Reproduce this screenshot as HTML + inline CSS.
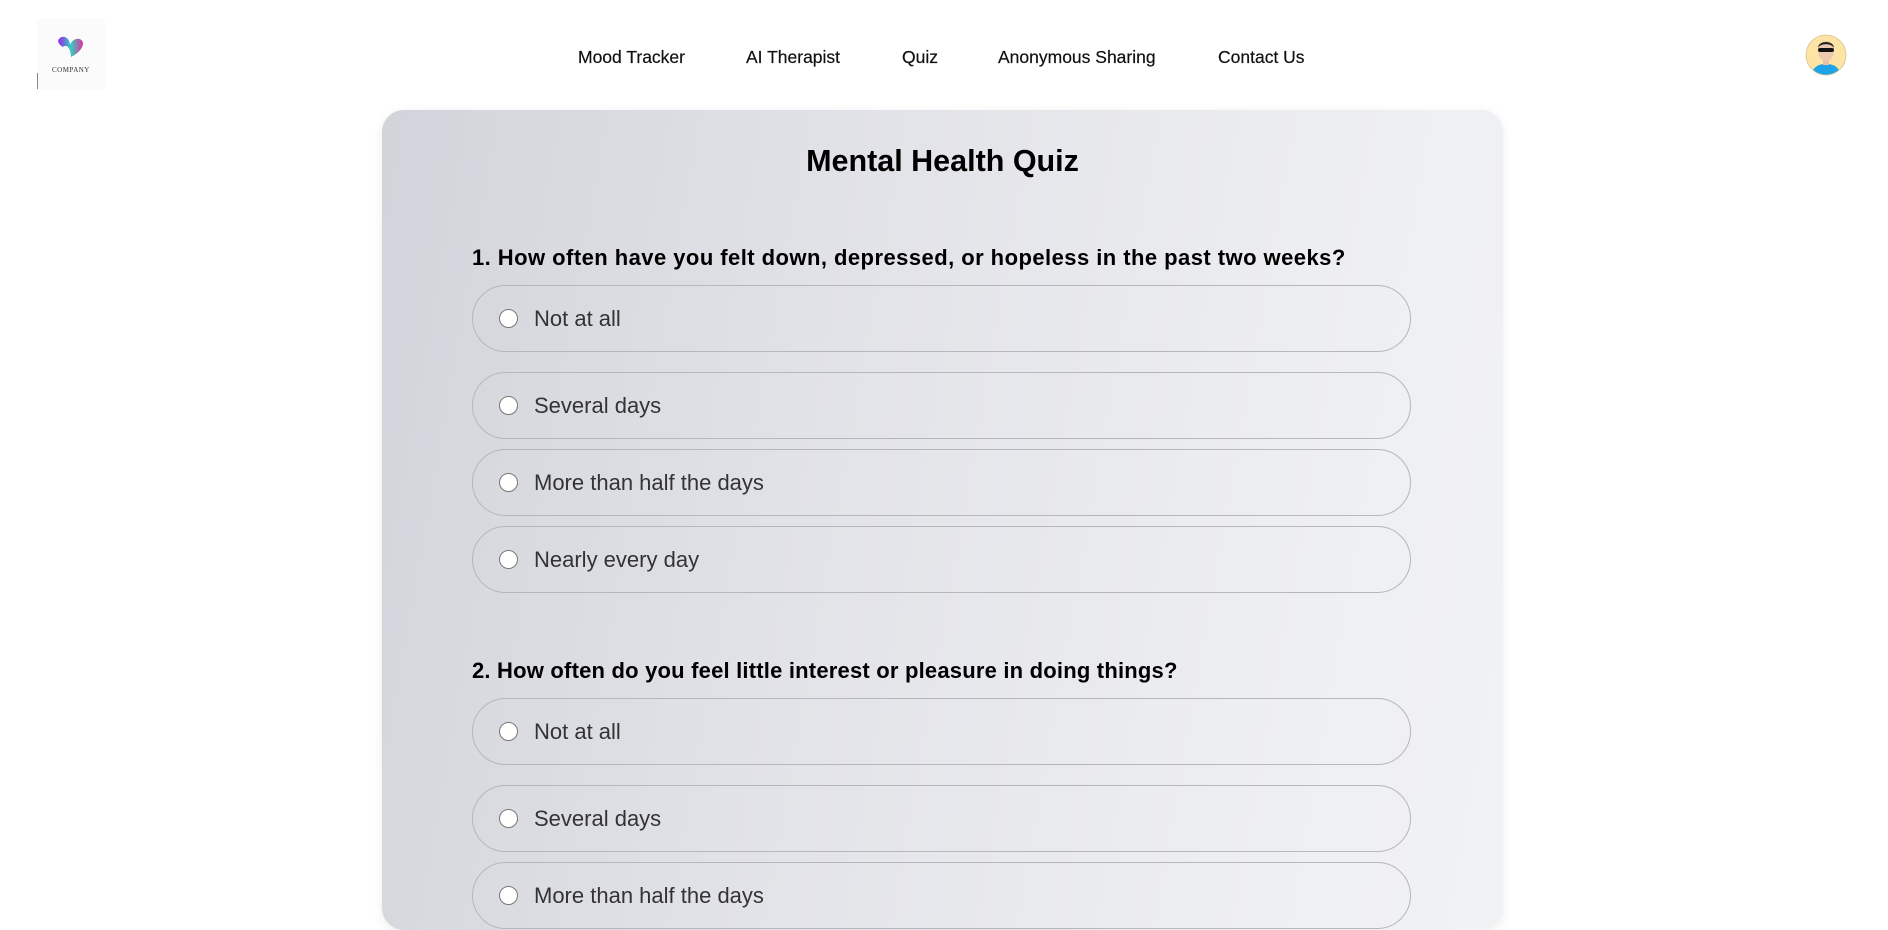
<!DOCTYPE html>
<html><head><meta charset="utf-8"><style>
*{margin:0;padding:0;box-sizing:border-box}
body{width:1888px;height:896px;overflow:hidden;background:#fff;font-family:"Liberation Sans",sans-serif;position:relative;color:#000}
.nav a{position:absolute;top:47px;font-size:17.5px;font-weight:500;color:#111;text-decoration:none;white-space:nowrap;-webkit-text-stroke:0.2px #111}
.card{position:absolute;left:382px;top:110px;width:1121px;height:820px;border-radius:22px;background:linear-gradient(100deg,#d1d4da 0%,#e2e3e8 40%,#eeeff2 80%,#f1f2f4 100%);box-shadow:0 2px 10px rgba(0,0,0,0.08)}
h1{position:absolute;left:0;width:100%;text-align:center;top:144px;font-size:30.5px;font-weight:bold;padding-right:3px}
.q{position:absolute;left:472px;font-size:22px;font-weight:bold;white-space:nowrap;letter-spacing:0.2px}
.o{position:absolute;left:472px;width:939px;height:67px;border:1px solid #b5b7bd;border-radius:34px}
.o i{position:absolute;left:26px;top:23px;width:19px;height:19px;border-radius:50%;background:#fff;border:1px solid #777}
.o span{position:absolute;left:61px;top:20px;font-size:22px;color:#333;white-space:nowrap}
</style></head><body>
<div style="position:absolute;left:37px;top:19px;width:68px;height:71px;background:#fbfbfb"></div>
<svg style="position:absolute;left:55px;top:35px" width="32" height="26" viewBox="0 0 32 26"><defs><linearGradient id="g" x1="0" x2="1"><stop offset="0" stop-color="#a020f0"/><stop offset="0.5" stop-color="#30d0c0"/><stop offset="1" stop-color="#e030a0"/></linearGradient></defs><path d="M4 4 C8 -1 15 3 15 10 C18 2 27 2 28 8 C28 14 22 19 16 22 C16 16 13 8 8 12 C4 10 2 6 4 4Z" fill="url(#g)"/></svg>
<div style="position:absolute;left:52px;top:66px;font-size:7px;font-family:'Liberation Serif',serif;color:#333;letter-spacing:0.5px">COMPANY</div>
<div style="position:absolute;left:37px;top:73px;width:1px;height:16px;background:#888"></div>
<div class="nav">
<a style="left:578px">Mood Tracker</a>
<a style="left:746px">AI Therapist</a>
<a style="left:902px">Quiz</a>
<a style="left:998px">Anonymous Sharing</a>
<a style="left:1218px">Contact Us</a>
</div>
<svg style="position:absolute;left:1805px;top:34px" width="42" height="42" viewBox="0 0 42 42"><clipPath id="c"><circle cx="21" cy="21" r="20"/></clipPath><g clip-path="url(#c)"><rect width="42" height="42" fill="#fde3a4"/><path d="M6 42 C8 32 14 30 21 30 C28 30 34 32 36 42Z" fill="#1fa3e8"/><rect x="18" y="25" width="6" height="6" fill="#e8c0a8"/><ellipse cx="21" cy="17" rx="8" ry="10" fill="#ecc8b0"/><path d="M13 14 C13 6 29 6 29 14 C27 9 15 9 13 14Z" fill="#222"/><rect x="13" y="14" width="16" height="4" rx="2" fill="#111"/></g><circle cx="21" cy="21" r="20" fill="none" stroke="#d8c090" stroke-width="0.8"/></svg>
<div class="card"></div>
<h1>Mental Health Quiz</h1>
<div class="q" style="top:245px;letter-spacing:0.45px">1. How often have you felt down, depressed, or hopeless in the past two weeks?</div>
<div class="o" style="top:285px"><i></i><span>Not at all</span></div>
<div class="o" style="top:372px"><i></i><span>Several days</span></div>
<div class="o" style="top:449px"><i></i><span>More than half the days</span></div>
<div class="o" style="top:526px"><i></i><span>Nearly every day</span></div>
<div class="q" style="top:658px">2. How often do you feel little interest or pleasure in doing things?</div>
<div class="o" style="top:698px"><i></i><span>Not at all</span></div>
<div class="o" style="top:785px"><i></i><span>Several days</span></div>
<div class="o" style="top:862px"><i></i><span>More than half the days</span></div>
</body></html>
